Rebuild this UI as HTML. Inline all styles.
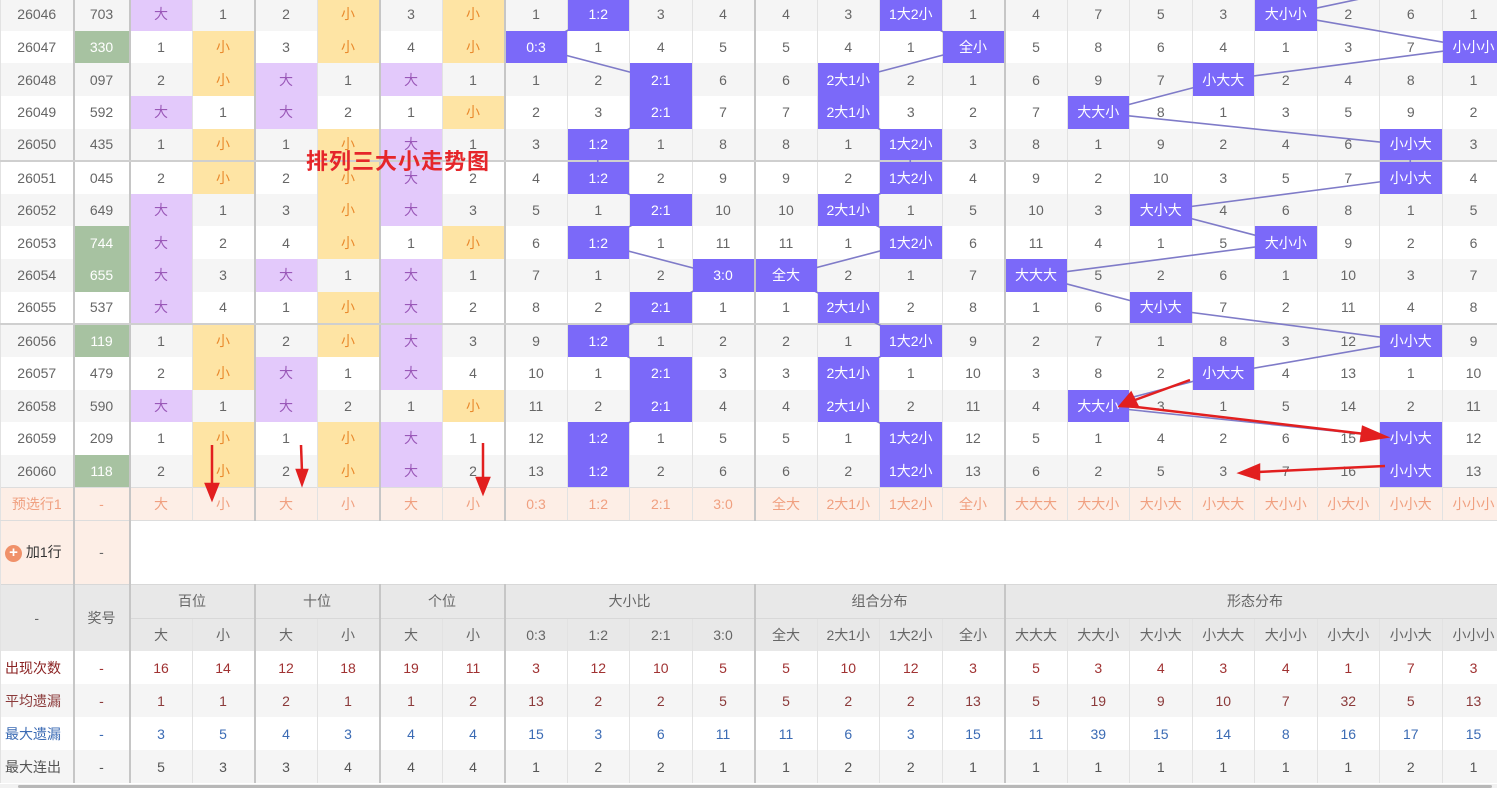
<!DOCTYPE html>
<html><head><meta charset="utf-8"><style>
body{margin:0;width:1497px;height:788px;overflow:hidden;background:#fff;position:relative;font-family:"Liberation Sans","Noto Sans CJK SC",sans-serif;}
table{position:absolute;left:0;top:-2px;border-collapse:collapse;table-layout:fixed;width:1504px;font-size:14px;color:#666;}
td{text-align:center;padding:0;white-space:nowrap;overflow:hidden;border-left:1px solid #e2e2e2;}
col.g{border-left:2px solid #c6c6c6}
tr.d{height:32.63px}
tr.a{background:#f5f5f5}
tr.s td{border-bottom:2px solid #cfcfcf}
.D{background:#e3c9fb;color:#9a58b8}
.X{background:#fee4a4;color:#e9892c}
.H{background:#7b69f9;color:#fff;position:relative;z-index:2}
.G{background:#a7c2a1;color:#fff}
tr.p{height:33px;background:#fdeee6;color:#f0a080}
tr.p td{border-top:1px solid #ddd;border-bottom:1px solid #ddd}
tr.p td:first-child{color:#f0a080}
tr.h{background:#e8e8e8;color:#666}
tr.h td{border-top:1px solid #d8d8d8}
tr.st{height:33px}
.r1 td{color:#a03232}.r1 td:first-child{color:#8b2323}
.r2 td{color:#8b3a3a}
.r3 td{color:#3b6bb4}
.r4 td{color:#555}
td.l{text-align:left;padding-left:4px}
</style></head><body>
<svg style="position:absolute;left:0;top:0;z-index:1" width="1497" height="788">
<g fill="none" stroke="#7f7bc8" stroke-width="1.6">
<polyline points="597.75,14.7 535.25,47.3 660.25,80 660.25,112.6 597.75,145.2 597.75,177.9 660.25,210.5 597.75,243.1 722.75,275.7 660.25,308.4 597.75,341 660.25,373.6 660.25,406.3 597.75,438.9 597.75,471.5"/>
<polyline points="910.25,14.7 972.75,47.3 847.75,80 847.75,112.6 910.25,145.2 910.25,177.9 847.75,210.5 910.25,243.1 785.25,275.7 847.75,308.4 910.25,341 847.75,373.6 847.75,406.3 910.25,438.9 910.25,471.5"/>
<polyline points="1440,-18 1285.25,14.7 1472.75,47.3 1222.75,80 1097.75,112.6 1410.25,145.2 1410.25,177.9 1160.25,210.5 1285.25,243.1 1035.25,275.7 1160.25,308.4 1410.25,341 1222.75,373.6 1097.75,406.3 1410.25,438.9 1410.25,471.5"/>
</g></svg>
<div style="position:absolute;left:306px;top:144px;z-index:3;color:#e5262a;font-weight:bold;font-size:22px;letter-spacing:1px">排列三大小走势图</div>
<svg style="position:absolute;left:0;top:0;z-index:4" width="1497" height="788">
<g stroke="#e21f1f" stroke-width="2.5" fill="#e21f1f">
<line x1="212" y1="445" x2="212" y2="486"/><polygon points="206,484 218,484 212,499"/>
<line x1="301" y1="445" x2="302" y2="472"/><polygon points="297,470 307,470 302,484"/>
<line x1="483" y1="443" x2="483" y2="480"/><polygon points="477,478 489,478 483,493"/>
<line x1="1190" y1="380" x2="1135" y2="400"/><polygon points="1120,406 1131,393 1138,407"/>
<line x1="1128" y1="406" x2="1365" y2="434"/><polygon points="1386,437 1363,427 1361,441"/>
<line x1="1385" y1="466" x2="1258" y2="472"/><polygon points="1240,473 1259,465 1259,479"/>
</g></svg>
<table>
<colgroup><col style="width:73px"><col class="g" style="width:56px"><col class="g" style="width:62.5px"><col style="width:62.5px"><col class="g" style="width:62.5px"><col style="width:62.5px"><col class="g" style="width:62.5px"><col style="width:62.5px"><col class="g" style="width:62.5px"><col style="width:62.5px"><col style="width:62.5px"><col style="width:62.5px"><col class="g" style="width:62.5px"><col style="width:62.5px"><col style="width:62.5px"><col style="width:62.5px"><col class="g" style="width:62.5px"><col style="width:62.5px"><col style="width:62.5px"><col style="width:62.5px"><col style="width:62.5px"><col style="width:62.5px"><col style="width:62.5px"><col style="width:62.5px"></colgroup>
<tr class="d a"><td>26046</td><td>703</td><td class="D">大</td><td>1</td><td>2</td><td class="X">小</td><td>3</td><td class="X">小</td><td>1</td><td class="H">1:2</td><td>3</td><td>4</td><td>4</td><td>3</td><td class="H">1大2小</td><td>1</td><td>4</td><td>7</td><td>5</td><td>3</td><td class="H">大小小</td><td>2</td><td>6</td><td>1</td></tr>
<tr class="d"><td>26047</td><td class="G">330</td><td>1</td><td class="X">小</td><td>3</td><td class="X">小</td><td>4</td><td class="X">小</td><td class="H">0:3</td><td>1</td><td>4</td><td>5</td><td>5</td><td>4</td><td>1</td><td class="H">全小</td><td>5</td><td>8</td><td>6</td><td>4</td><td>1</td><td>3</td><td>7</td><td class="H">小小小</td></tr>
<tr class="d a"><td>26048</td><td>097</td><td>2</td><td class="X">小</td><td class="D">大</td><td>1</td><td class="D">大</td><td>1</td><td>1</td><td>2</td><td class="H">2:1</td><td>6</td><td>6</td><td class="H">2大1小</td><td>2</td><td>1</td><td>6</td><td>9</td><td>7</td><td class="H">小大大</td><td>2</td><td>4</td><td>8</td><td>1</td></tr>
<tr class="d"><td>26049</td><td>592</td><td class="D">大</td><td>1</td><td class="D">大</td><td>2</td><td>1</td><td class="X">小</td><td>2</td><td>3</td><td class="H">2:1</td><td>7</td><td>7</td><td class="H">2大1小</td><td>3</td><td>2</td><td>7</td><td class="H">大大小</td><td>8</td><td>1</td><td>3</td><td>5</td><td>9</td><td>2</td></tr>
<tr class="d a s"><td>26050</td><td>435</td><td>1</td><td class="X">小</td><td>1</td><td class="X">小</td><td class="D">大</td><td>1</td><td>3</td><td class="H">1:2</td><td>1</td><td>8</td><td>8</td><td>1</td><td class="H">1大2小</td><td>3</td><td>8</td><td>1</td><td>9</td><td>2</td><td>4</td><td>6</td><td class="H">小小大</td><td>3</td></tr>
<tr class="d"><td>26051</td><td>045</td><td>2</td><td class="X">小</td><td>2</td><td class="X">小</td><td class="D">大</td><td>2</td><td>4</td><td class="H">1:2</td><td>2</td><td>9</td><td>9</td><td>2</td><td class="H">1大2小</td><td>4</td><td>9</td><td>2</td><td>10</td><td>3</td><td>5</td><td>7</td><td class="H">小小大</td><td>4</td></tr>
<tr class="d a"><td>26052</td><td>649</td><td class="D">大</td><td>1</td><td>3</td><td class="X">小</td><td class="D">大</td><td>3</td><td>5</td><td>1</td><td class="H">2:1</td><td>10</td><td>10</td><td class="H">2大1小</td><td>1</td><td>5</td><td>10</td><td>3</td><td class="H">大小大</td><td>4</td><td>6</td><td>8</td><td>1</td><td>5</td></tr>
<tr class="d"><td>26053</td><td class="G">744</td><td class="D">大</td><td>2</td><td>4</td><td class="X">小</td><td>1</td><td class="X">小</td><td>6</td><td class="H">1:2</td><td>1</td><td>11</td><td>11</td><td>1</td><td class="H">1大2小</td><td>6</td><td>11</td><td>4</td><td>1</td><td>5</td><td class="H">大小小</td><td>9</td><td>2</td><td>6</td></tr>
<tr class="d a"><td>26054</td><td class="G">655</td><td class="D">大</td><td>3</td><td class="D">大</td><td>1</td><td class="D">大</td><td>1</td><td>7</td><td>1</td><td>2</td><td class="H">3:0</td><td class="H">全大</td><td>2</td><td>1</td><td>7</td><td class="H">大大大</td><td>5</td><td>2</td><td>6</td><td>1</td><td>10</td><td>3</td><td>7</td></tr>
<tr class="d s"><td>26055</td><td>537</td><td class="D">大</td><td>4</td><td>1</td><td class="X">小</td><td class="D">大</td><td>2</td><td>8</td><td>2</td><td class="H">2:1</td><td>1</td><td>1</td><td class="H">2大1小</td><td>2</td><td>8</td><td>1</td><td>6</td><td class="H">大小大</td><td>7</td><td>2</td><td>11</td><td>4</td><td>8</td></tr>
<tr class="d a"><td>26056</td><td class="G">119</td><td>1</td><td class="X">小</td><td>2</td><td class="X">小</td><td class="D">大</td><td>3</td><td>9</td><td class="H">1:2</td><td>1</td><td>2</td><td>2</td><td>1</td><td class="H">1大2小</td><td>9</td><td>2</td><td>7</td><td>1</td><td>8</td><td>3</td><td>12</td><td class="H">小小大</td><td>9</td></tr>
<tr class="d"><td>26057</td><td>479</td><td>2</td><td class="X">小</td><td class="D">大</td><td>1</td><td class="D">大</td><td>4</td><td>10</td><td>1</td><td class="H">2:1</td><td>3</td><td>3</td><td class="H">2大1小</td><td>1</td><td>10</td><td>3</td><td>8</td><td>2</td><td class="H">小大大</td><td>4</td><td>13</td><td>1</td><td>10</td></tr>
<tr class="d a"><td>26058</td><td>590</td><td class="D">大</td><td>1</td><td class="D">大</td><td>2</td><td>1</td><td class="X">小</td><td>11</td><td>2</td><td class="H">2:1</td><td>4</td><td>4</td><td class="H">2大1小</td><td>2</td><td>11</td><td>4</td><td class="H">大大小</td><td>3</td><td>1</td><td>5</td><td>14</td><td>2</td><td>11</td></tr>
<tr class="d"><td>26059</td><td>209</td><td>1</td><td class="X">小</td><td>1</td><td class="X">小</td><td class="D">大</td><td>1</td><td>12</td><td class="H">1:2</td><td>1</td><td>5</td><td>5</td><td>1</td><td class="H">1大2小</td><td>12</td><td>5</td><td>1</td><td>4</td><td>2</td><td>6</td><td>15</td><td class="H">小小大</td><td>12</td></tr>
<tr class="d a"><td>26060</td><td class="G">118</td><td>2</td><td class="X">小</td><td>2</td><td class="X">小</td><td class="D">大</td><td>2</td><td>13</td><td class="H">1:2</td><td>2</td><td>6</td><td>6</td><td>2</td><td class="H">1大2小</td><td>13</td><td>6</td><td>2</td><td>5</td><td>3</td><td>7</td><td>16</td><td class="H">小小大</td><td>13</td></tr>
<tr class="p"><td>预选行1</td><td>-</td><td>大</td><td>小</td><td>大</td><td>小</td><td>大</td><td>小</td><td>0:3</td><td>1:2</td><td>2:1</td><td>3:0</td><td>全大</td><td>2大1小</td><td>1大2小</td><td>全小</td><td>大大大</td><td>大大小</td><td>大小大</td><td>小大大</td><td>大小小</td><td>小大小</td><td>小小大</td><td>小小小</td></tr>
<tr style="height:64px"><td class="l" style="background:#fdeee6;color:#333"><span style="display:inline-block;width:17px;height:17px;border-radius:50%;background:#f0916a;color:#fff;font-size:15px;line-height:16px;text-align:center;vertical-align:middle;font-weight:bold">+</span> 加1行</td><td style="background:#fdeee6">-</td><td colspan="22" style="background:#fff"></td></tr>
<tr class="h" style="height:34px"><td rowspan="2">-</td><td rowspan="2">奖号</td><td colspan="2">百位</td><td colspan="2">十位</td><td colspan="2">个位</td><td colspan="4">大小比</td><td colspan="4">组合分布</td><td colspan="8">形态分布</td></tr>
<tr class="h" style="height:33px"><td>大</td><td>小</td><td>大</td><td>小</td><td>大</td><td>小</td><td>0:3</td><td>1:2</td><td>2:1</td><td>3:0</td><td>全大</td><td>2大1小</td><td>1大2小</td><td>全小</td><td>大大大</td><td>大大小</td><td>大小大</td><td>小大大</td><td>大小小</td><td>小大小</td><td>小小大</td><td>小小小</td></tr>
<tr class="st r1"><td class="l">出现次数</td><td>-</td><td>16</td><td>14</td><td>12</td><td>18</td><td>19</td><td>11</td><td>3</td><td>12</td><td>10</td><td>5</td><td>5</td><td>10</td><td>12</td><td>3</td><td>5</td><td>3</td><td>4</td><td>3</td><td>4</td><td>1</td><td>7</td><td>3</td></tr>
<tr class="st r2 a"><td class="l">平均遗漏</td><td>-</td><td>1</td><td>1</td><td>2</td><td>1</td><td>1</td><td>2</td><td>13</td><td>2</td><td>2</td><td>5</td><td>5</td><td>2</td><td>2</td><td>13</td><td>5</td><td>19</td><td>9</td><td>10</td><td>7</td><td>32</td><td>5</td><td>13</td></tr>
<tr class="st r3"><td class="l">最大遗漏</td><td>-</td><td>3</td><td>5</td><td>4</td><td>3</td><td>4</td><td>4</td><td>15</td><td>3</td><td>6</td><td>11</td><td>11</td><td>6</td><td>3</td><td>15</td><td>11</td><td>39</td><td>15</td><td>14</td><td>8</td><td>16</td><td>17</td><td>15</td></tr>
<tr class="st r4 a"><td class="l">最大连出</td><td>-</td><td>5</td><td>3</td><td>3</td><td>4</td><td>4</td><td>4</td><td>1</td><td>2</td><td>2</td><td>1</td><td>1</td><td>2</td><td>2</td><td>1</td><td>1</td><td>1</td><td>1</td><td>1</td><td>1</td><td>1</td><td>2</td><td>1</td></tr>
</table>
<div style="position:absolute;left:0;top:784px;width:1497px;height:4px;background:#f1f1f1;z-index:5"></div>
<div style="position:absolute;left:18px;top:785px;width:1474px;height:3px;background:#b8b8b8;border-radius:2px;z-index:6"></div>
</body></html>
